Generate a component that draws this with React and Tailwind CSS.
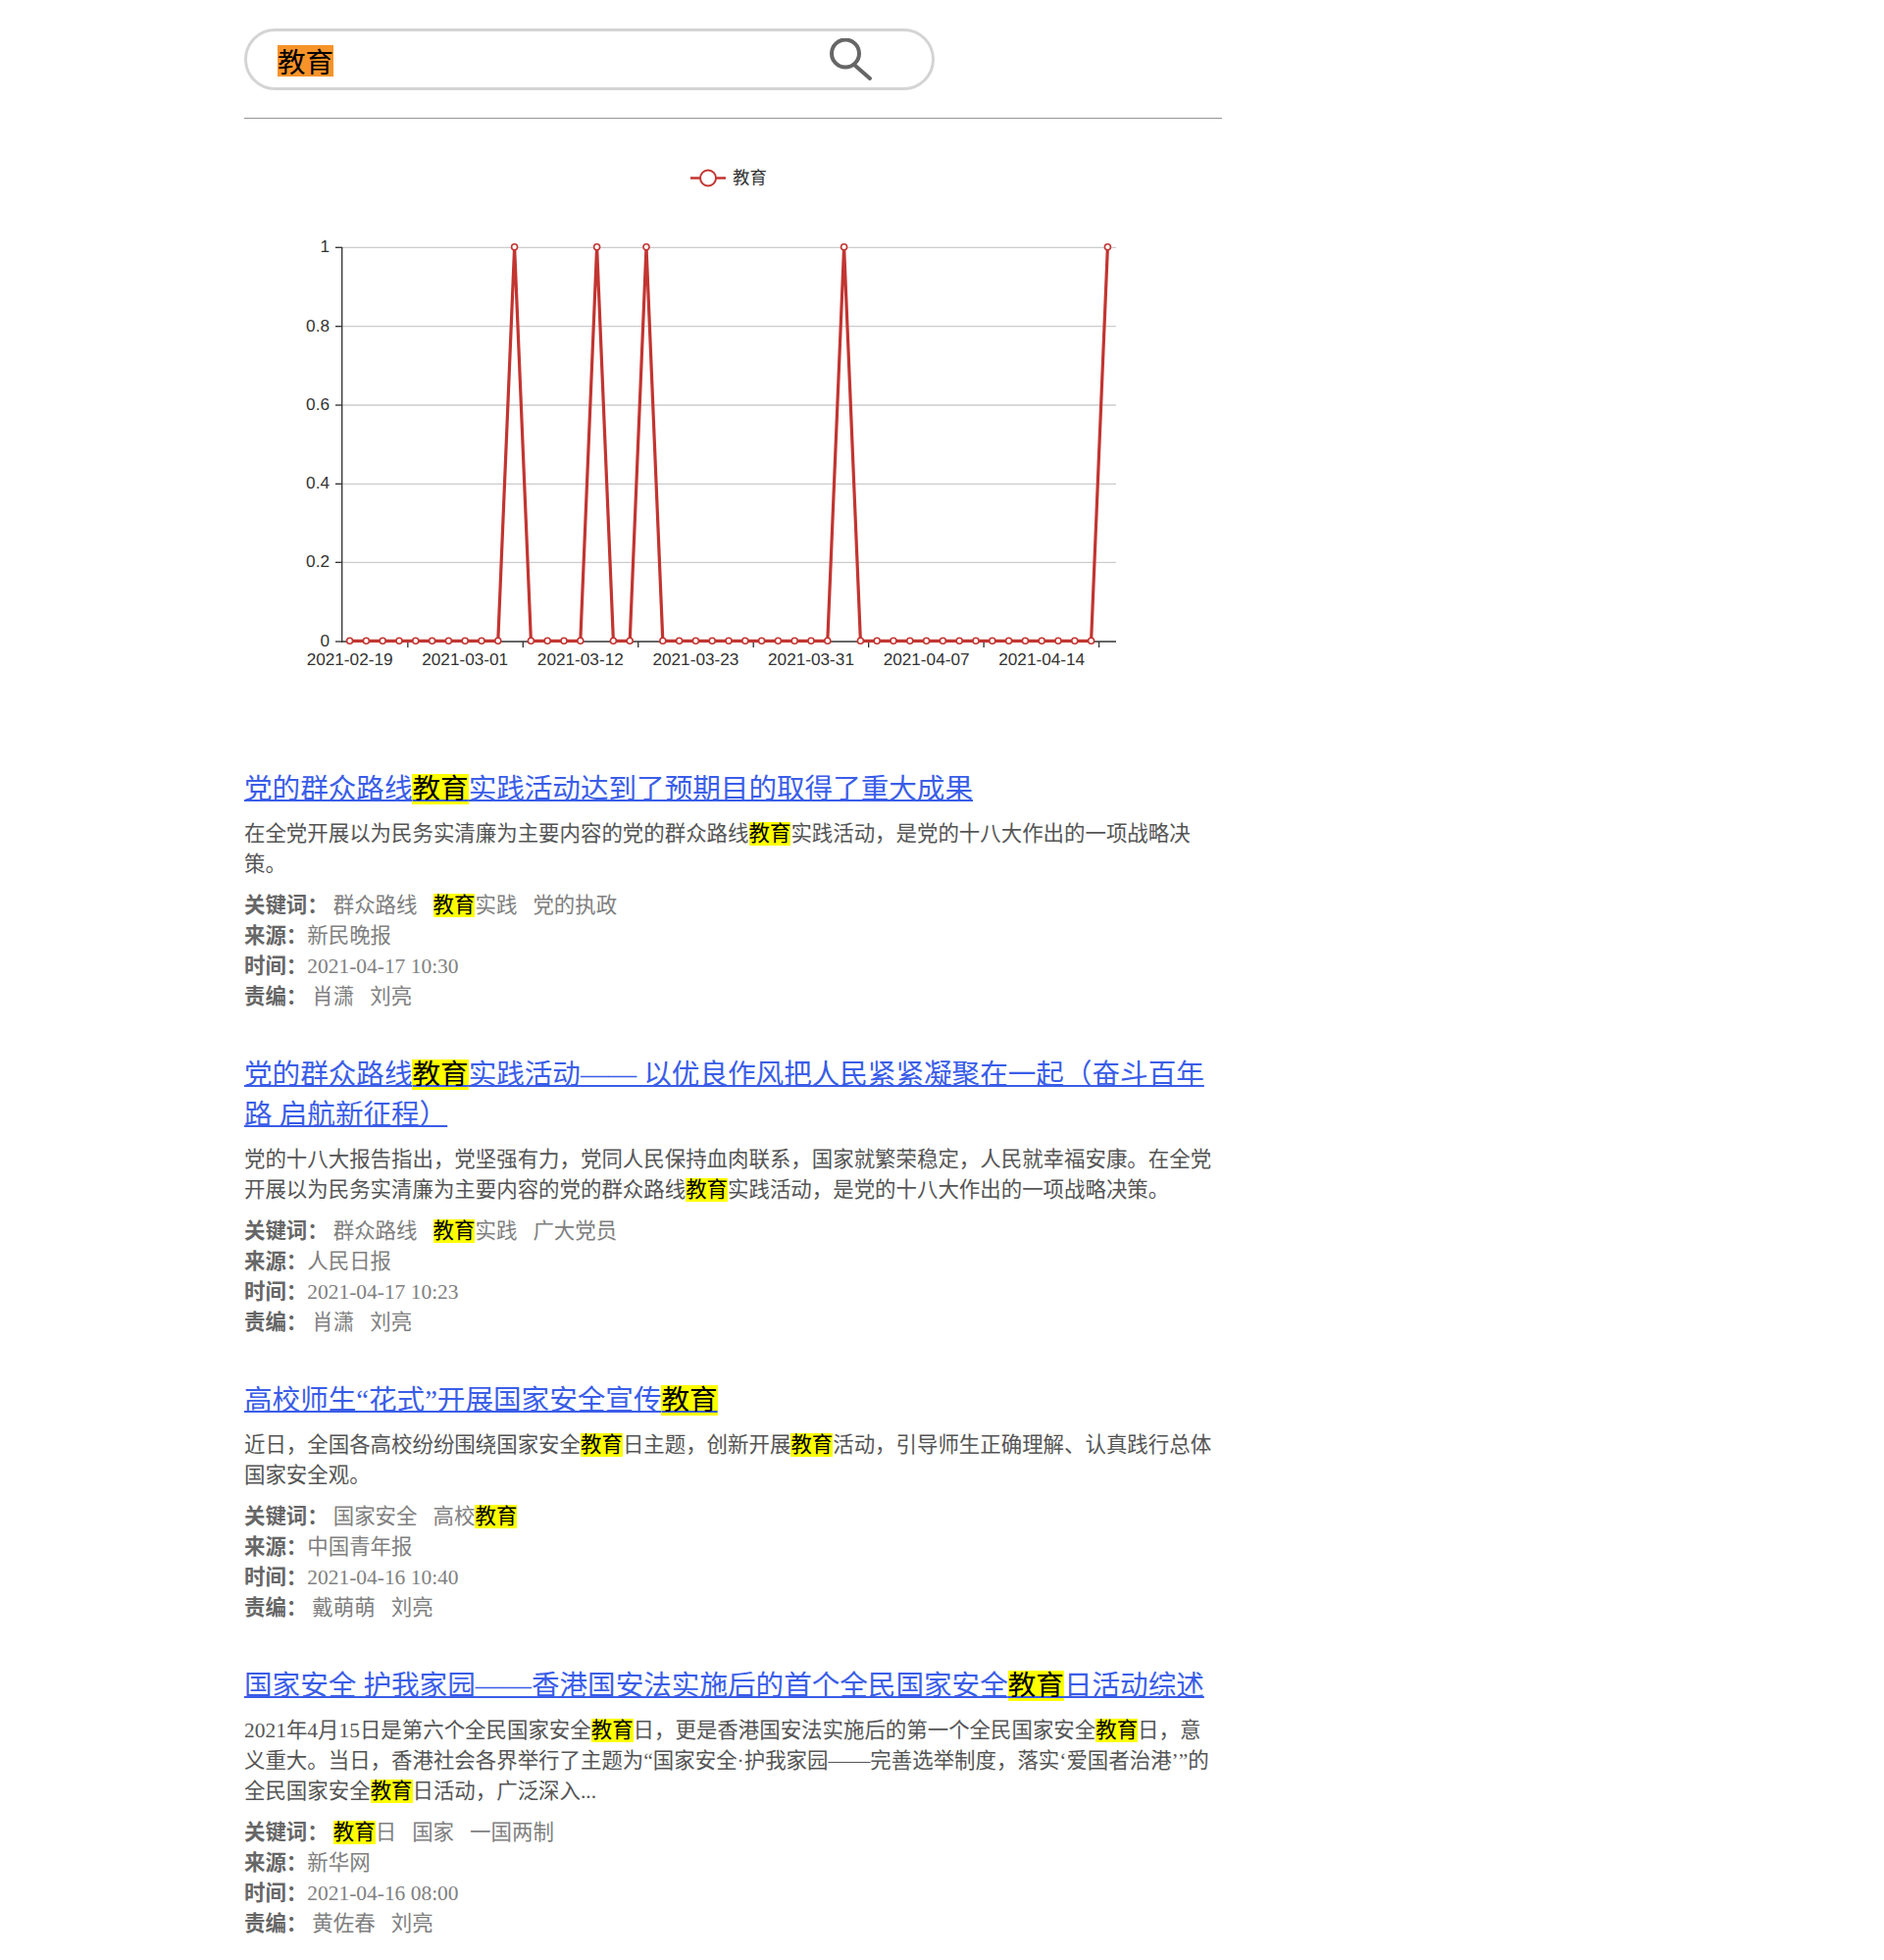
import React from "react";

const M = ({ children }) => <mark className="bg-[#ffff00] text-black">{children}</mark>;
const peaks = [10, 15, 18, 30, 46];
const pts = Array.from({ length: 47 }, (_, i) => [356.6 + i * 16.8, peaks.includes(i) ? 251.7 : 653.3]);
const ticks = [4, 11, 18, 25, 32, 39, 46];
const ys = [[252.3, "1"], [332.7, "0.8"], [413, "0.6"], [493.3, "0.4"], [573.3, "0.2"], [654, "0"]];
const labels = ["2021-02-19", "2021-03-01", "2021-03-12", "2021-03-23", "2021-03-31", "2021-04-07", "2021-04-14"];

function Chart() {
  return (
    <svg width="997" height="600" viewBox="249 122 997 600" className="block" style={{ fontFamily: '"Liberation Sans","Noto Sans CJK SC",sans-serif' }}>
      <line x1="704" x2="740" y1="181.5" y2="181.5" stroke="#c23531" strokeWidth="2.68" />
      <circle cx="722" cy="181.5" r="8" fill="#fff" stroke="#c23531" strokeWidth="2" />
      <text x="747" y="187" fontSize="17.4" fill="#333">教育</text>
      {ys.map(([y, t]) => (
        <g key={t}>
          {y !== 654 && <line x1="349" x2="1138" y1={y} y2={y} stroke="#ccc" strokeWidth="1.34" />}
          <line x1="342" x2="349" y1={y} y2={y} stroke="#333" strokeWidth="1.34" />
          <text x="336" y={y + 5} textAnchor="end" fontSize="17.2" fill="#333">{t}</text>
        </g>
      ))}
      <line x1="348.7" x2="348.7" y1="252" y2="654.5" stroke="#333" strokeWidth="1.34" />
      <line x1="348" x2="1138" y1="654" y2="654" stroke="#333" strokeWidth="1.34" />
      {ticks.map((i) => (
        <line key={i} x1={348.7 + i * 16.78} x2={348.7 + i * 16.78} y1="654" y2="660" stroke="#333" strokeWidth="1.34" />
      ))}
      {labels.map((t, i) => (
        <text key={t} x={356.6 + i * 7 * 16.8} y="678" textAnchor="middle" fontSize="17.2" fill="#333">{t}</text>
      ))}
      <polyline points={pts.map((p) => p.join(",")).join(" ")} fill="none" stroke="#c23531" strokeWidth="3.2" />
      {pts.map(([x, y], i) => (
        <circle key={i} cx={x} cy={y} r="3" fill="#fff" stroke="#c23531" strokeWidth="1.6" />
      ))}
    </svg>
  );
}

function Item({ title, body, kw, source, time, editors }) {
  return (
    <div className="mb-[43.3px]">
      <a href="#" className="block text-[28.58px] leading-[41px] text-[#3a5de8] underline decoration-2">{title}</a>
      <p className="mt-[10px] max-w-[994px] text-[21.44px] leading-[31px] text-[#555555]">{body}</p>
      <div className="mt-[11px] text-[21.44px] leading-[31px] text-[#808080]">
        <div><b className="text-[#666666]">关键词：</b><span className="ml-[5px]">{kw}</span></div>
        <div><b className="text-[#666666]">来源：</b>{source}</div>
        <div><b className="text-[#666666]">时间：</b>{time}</div>
        <div><b className="text-[#666666]">责编：</b><span className="ml-[5px]">{editors}</span></div>
      </div>
    </div>
  );
}

const sp = "\u00a0\u00a0\u00a0";

export default function App() {
  return (
    <div className="bg-white min-h-[1998px] h-[1998px] w-[1921px] overflow-hidden pl-[249px] pt-[29px]" style={{ fontFamily: '"Liberation Serif","Noto Sans CJK SC",serif' }}>
      <div className="w-[997px]">
        <div className="flex h-[63px] w-[704px] items-center justify-between rounded-[32px] border-[3px] border-[#d4d4d4] pl-[31px] pr-[60px]">
          <span className="mt-[2px] bg-[#f79329] text-[28.58px] leading-[32px] text-black" style={{ fontFamily: '"Noto Sans CJK SC",sans-serif' }}>教育</span>
          <svg width="44" height="44" viewBox="0 0 44 44" fill="none" stroke="#666" strokeWidth="4" strokeLinecap="round">
            <circle cx="16" cy="15.5" r="14" />
            <line x1="25" y1="27" x2="41" y2="41" />
          </svg>
        </div>
        <div className="mt-[28px] border-t-[1.5px] border-b border-t-[#999999] border-b-[#eeeeee]" />
        <Chart />
        <div className="mt-[61.6px]">
          <Item
            title={<>党的群众路线<M>教育</M>实践活动达到了预期目的取得了重大成果</>}
            body={<>在全党开展以为民务实清廉为主要内容的党的群众路线<M>教育</M>实践活动，是党的十八大作出的一项战略决策。</>}
            kw={<>群众路线{sp}<M>教育</M>实践{sp}党的执政</>}
            source="新民晚报"
            time="2021-04-17 10:30"
            editors={`肖潇${sp}刘亮`}
          />
          <Item
            title={<>党的群众路线<M>教育</M>实践活动—— 以优良作风把人民紧紧凝聚在一起（奋斗百年路 启航新征程）</>}
            body={<>党的十八大报告指出，党坚强有力，党同人民保持血肉联系，国家就繁荣稳定，人民就幸福安康。在全党开展以为民务实清廉为主要内容的党的群众路线<M>教育</M>实践活动，是党的十八大作出的一项战略决策。</>}
            kw={<>群众路线{sp}<M>教育</M>实践{sp}广大党员</>}
            source="人民日报"
            time="2021-04-17 10:23"
            editors={`肖潇${sp}刘亮`}
          />
          <Item
            title={<>高校师生“花式”开展国家安全宣传<M>教育</M></>}
            body={<>近日，全国各高校纷纷围绕国家安全<M>教育</M>日主题，创新开展<M>教育</M>活动，引导师生正确理解、认真践行总体国家安全观。</>}
            kw={<>国家安全{sp}高校<M>教育</M></>}
            source="中国青年报"
            time="2021-04-16 10:40"
            editors={`戴萌萌${sp}刘亮`}
          />
          <Item
            title={<>国家安全 护我家园——香港国安法实施后的首个全民国家安全<M>教育</M>日活动综述</>}
            body={<>2021年4月15日是第六个全民国家安全<M>教育</M>日，更是香港国安法实施后的第一个全民国家安全<M>教育</M>日，意义重大。当日，香港社会各界举行了主题为“国家安全·护我家园——完善选举制度，落实‘爱国者治港’”的全民国家安全<M>教育</M>日活动，广泛深入...</>}
            kw={<><M>教育</M>日{sp}国家{sp}一国两制</>}
            source="新华网"
            time="2021-04-16 08:00"
            editors={`黄佐春${sp}刘亮`}
          />
        </div>
      </div>
    </div>
  );
}
